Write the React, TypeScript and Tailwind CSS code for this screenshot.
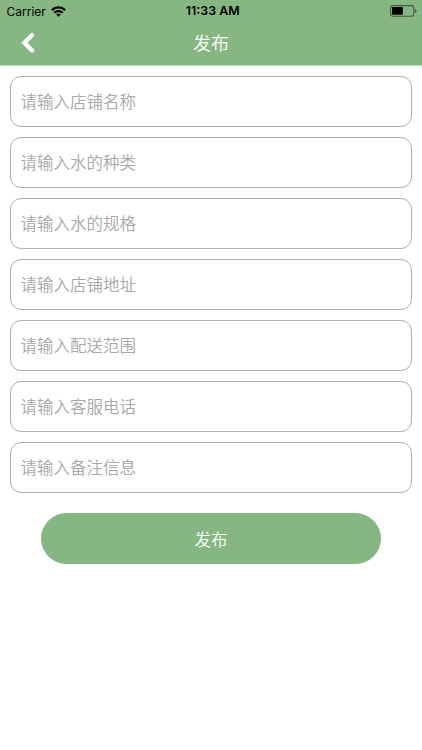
import React, { useState } from 'react';

interface Field {
  name: string;
  placeholder: string;
}

const fields: Field[] = [
  { name: 'shopName', placeholder: '请输入店铺名称' },
  { name: 'waterType', placeholder: '请输入水的种类' },
  { name: 'waterSpec', placeholder: '请输入水的规格' },
  { name: 'address', placeholder: '请输入店铺地址' },
  { name: 'range', placeholder: '请输入配送范围' },
  { name: 'phone', placeholder: '请输入客服电话' },
  { name: 'remark', placeholder: '请输入备注信息' },
];

const WifiIcon = () => (
  <svg width="15" height="11" viewBox="0 0 15 11" fill="none" stroke="#000" strokeWidth="2.2">
    <path d="M0.9 4.1a9.4 9.4 0 0 1 13.2 0" />
    <path d="M3.3 6.8a6 6 0 0 1 8.4 0" />
    <path d="M7.5 10.8 5.2 8.5a3.3 3.3 0 0 1 4.6 0z" fill="#000" stroke="none" />
  </svg>
);

const BatteryIcon = () => (
  <svg width="27" height="12" viewBox="0 0 27 12" fill="none">
    <rect x="0.6" y="0.6" width="23.2" height="10.6" rx="2.4" stroke="#000" strokeOpacity="0.5" strokeWidth="1.1" />
    <rect x="2" y="2" width="10.8" height="7.8" rx="0.8" fill="#000" />
    <path d="M25 4v4c.9-.3 1.5-1.1 1.5-2S25.9 4.3 25 4z" fill="#000" fillOpacity="0.5" />
  </svg>
);

const StatusBar = () => (
  <div className="grid h-[22px] grid-cols-3 items-center pr-[5px] pl-[6.5px] text-black">
    <div className="flex items-center gap-[5px]">
      <span className="pt-px text-[12px] leading-none">Carrier</span>
      <WifiIcon />
    </div>
    <span className="pt-px pl-[2px] text-center text-[12.4px] leading-none font-semibold">11:33 AM</span>
    <div className="flex justify-end">
      <BatteryIcon />
    </div>
  </div>
);

export default function App() {
  const [values, setValues] = useState<Record<string, string>>({});

  const handleChange = (name: string, value: string) => {
    setValues({ ...values, [name]: value });
  };

  return (
    <div className="min-h-[750px] w-full bg-white font-['Inter','Noto_Sans_CJK_SC',sans-serif]">
      <header className="h-[65px] bg-[#86b681]">
        <StatusBar />
        <div className="grid h-[42px] grid-cols-3 items-center text-white">
          <button type="button" className="ml-[21px] w-[14px]" aria-label="返回">
            <svg width="14" height="22" viewBox="0 0 14 22" fill="none" stroke="#fff" strokeWidth="4.4" strokeLinecap="round">
              <path d="M11 3.2 3.4 10.8l7.6 7.6" />
            </svg>
          </button>
          <h1 className="pt-[2px] text-center text-[18px] leading-none font-[350]">发布</h1>
        </div>
      </header>

      <form className="border-t border-[#c0e0bc] pt-[9.5px] pr-[10.5px] pl-[10px]" onSubmit={(e) => e.preventDefault()}>
        <div className="flex flex-col gap-[10.1px]">
          {fields.map(field => (
            <input
              key={field.name}
              type="text"
              placeholder={field.placeholder}
              value={values[field.name] ?? ''}
              onChange={(e) => handleChange(field.name, e.target.value)}
              className="h-[51px] w-full rounded-[11px] border border-[#b0b0b0] px-[9.5px] pt-px text-[16.5px] font-[350] text-gray-800 outline-none placeholder:text-[#a8a8a8]"
            />
          ))}
        </div>
        <div className="pt-[20px] pr-[30.5px] pl-[31px]">
          <button type="submit" className="h-[51px] w-full rounded-full bg-[#86b681] pt-[3px] text-[16.5px] font-[350] text-white">
            发布
          </button>
        </div>
      </form>
    </div>
  );
}
